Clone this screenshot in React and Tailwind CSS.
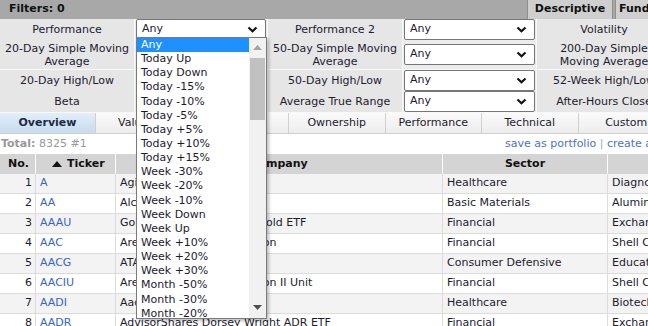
import React from "react";

const filterRows = [
  { h: "h-[21px]", cells: ["Performance", "Performance 2", "Volatility"] },
  {
    h: "h-[30px]",
    cells: ["20-Day Simple Moving Average", "50-Day Simple Moving Average", "200-Day Simple Moving Average"],
  },
  { h: "h-[21px]", cells: ["20-Day High/Low", "50-Day High/Low", "52-Week High/Low"] },
  { h: "h-[22px]", cells: ["Beta", "Average True Range", "After-Hours Close"] },
];

const tabs = ["Overview", "Valuation", "Financial", "Ownership", "Performance", "Technical", "Custom"];

const rows = [
  ["1", "A", "Agilent Technologies Inc", "Healthcare", "Diagnostics & Research"],
  ["2", "AA", "Alcoa Corp", "Basic Materials", "Aluminum"],
  ["3", "AAAU", "Goldman Sachs Physical Gold ETF", "Financial", "Exchange Traded Fund"],
  ["4", "AAC", "Ares Acquisition Corporation", "Financial", "Shell Companies"],
  ["5", "AACG", "ATA Creativity Global ADR", "Consumer Defensive", "Education & Training Services"],
  ["6", "AACIU", "Ares Acquisition Corporation II Unit", "Financial", "Shell Companies"],
  ["7", "AADI", "Aadi Bioscience Inc", "Healthcare", "Biotechnology"],
  ["8", "AADR", "AdvisorShares Dorsey Wright ADR ETF", "Financial", "Exchange Traded Fund"],
];

const options = [
  "Any", "Today Up", "Today Down", "Today -15%", "Today -10%", "Today -5%", "Today +5%",
  "Today +10%", "Today +15%", "Week -30%", "Week -20%", "Week -10%", "Week Down", "Week Up",
  "Week +10%", "Week +20%", "Week +30%", "Month -50%", "Month -30%", "Month -20%",
];

function Chevron() {
  return (
    <svg width="11" height="7" viewBox="0 0 11 7" className="shrink-0">
      <path d="M1.5 1.5 L5.5 5.2 L9.5 1.5" fill="none" stroke="#111" strokeWidth="2.2" />
    </svg>
  );
}

function Select() {
  return (
    <div className="flex h-[21px] w-full items-center justify-between rounded-[2px] border border-[#767676] bg-white pl-[5px] pr-[7px]">
      <span>Any</span>
      <Chevron />
    </div>
  );
}

function Label({ text }) {
  return (
    <div className="flex items-center justify-center border-r border-b border-[#f8f8f8] bg-[#e6e6e6] px-1 text-center leading-[13px] text-[#1d1a2e]">
      {text}
    </div>
  );
}

function SelectCell() {
  return (
    <div className="flex items-center border-r border-b border-[#f8f8f8] bg-[#ececec] px-px">
      <Select />
    </div>
  );
}

export default function App() {
  return (
    <div
      className="relative h-[326px] w-[648px] overflow-hidden bg-white text-[11px] text-[#1d1a2e]"
      style={{ fontFamily: '"DejaVu Sans", Verdana, sans-serif' }}
    >
      <div className="w-[760px]">
        {/* top bar */}
        <div className="flex h-[19px] items-stretch bg-[#a8a8a8]">
          <div className="flex w-[527px] items-center pl-[9px] font-bold text-[#111]">Filters: 0</div>
          <div className="flex w-[86px] items-center justify-center border-x border-[#8f8f8f] bg-[#cfcfcf] font-bold text-[#111]">
            Descriptive
          </div>
          <div className="ml-[2px] flex flex-1 items-center border-l border-[#8f8f8f] bg-[#cfcfcf] pl-[3px] font-bold text-[#111]">
            Fundamental
          </div>
        </div>

        {/* filters */}
        {filterRows.map((r, i) => (
          <div key={i} className={`grid ${r.h} grid-cols-[135px_133px_135px_134px_135px_130px]`}>
            <Label text={r.cells[0]} />
            <SelectCell />
            <Label text={r.cells[1]} />
            <SelectCell />
            <Label text={r.cells[2]} />
            <SelectCell />
          </div>
        ))}

        {/* tabs */}
        <div className="flex h-[21px] border-b border-[#d0d0d0] bg-[#f2f2f2]">
          {tabs.map((t, i) => (
            <div
              key={t}
              className={
                i === 0
                  ? "flex w-[96px] items-center justify-center border-r border-[#d0d0d0] bg-gradient-to-b from-[#e4eef8] to-[#c6dcef] font-bold text-[#1d2a44]"
                  : "flex w-[96.5px] items-center justify-center border-r border-[#d0d0d0] bg-gradient-to-b from-[#fafafa] to-[#ededed]"
              }
            >
              {t}
            </div>
          ))}
        </div>

        {/* total line */}
        <div className="grid h-[20px] grid-cols-[505px_1fr] items-center text-[#999]">
          <div className="pl-[1px]">
            <span className="font-bold">Total:</span> 8325 #1
          </div>
          <div className="whitespace-nowrap text-[#4a72cf]">
            save as portfolio <span className="text-[#9ab]">|</span> create alert
          </div>
        </div>

        {/* table */}
        <div className="grid h-[20px] grid-cols-[36px_80px_327px_165px_152px] bg-[#d4d4d4] font-bold text-[#111]">
          <div className="flex items-center border-r border-white pl-[8px]">No.</div>
          <div className="flex items-center gap-[5px] border-r border-white pl-[16px]">
            <svg width="10" height="6" viewBox="0 0 10 6">
              <path d="M0 6 L5 0 L10 6 Z" fill="#111" />
            </svg>
            Ticker
          </div>
          <div className="flex items-center justify-center border-r border-white">Company</div>
          <div className="flex items-center justify-center border-r border-white">Sector</div>
          <div className="flex items-center justify-center">Industry</div>
        </div>
        {rows.map((r, i) => (
          <div
            key={r[0]}
            className={`grid h-[20px] grid-cols-[36px_80px_327px_165px_152px] border-b border-[#dcdcdc] ${
              i % 2 === 0 ? "bg-[#f3f3f3]" : "bg-white"
            }`}
          >
            <div className="flex items-center justify-end border-r border-[#dcdcdc] pr-[3px]">{r[0]}</div>
            <div className="flex items-center border-r border-[#dcdcdc] pl-[4px] text-[#3565c8]">{r[1]}</div>
            <div className="flex items-center border-r border-[#dcdcdc] pl-[4px] whitespace-nowrap">{r[2]}</div>
            <div className="flex items-center border-r border-[#dcdcdc] pl-[4px] whitespace-nowrap">{r[3]}</div>
            <div className="flex items-center pl-[4px] whitespace-nowrap">{r[4]}</div>
          </div>
        ))}
      </div>

      {/* open dropdown */}
      <div className="absolute left-[136px] top-[37px] flex h-[282px] w-[131px] border border-[#7a7a7a] bg-white shadow-[2px_2px_3px_rgba(0,0,0,0.25)]">
        <div className="flex-1">
          {options.map((o, i) => (
            <div
              key={o}
              className={`flex h-[14.15px] items-center pl-[4px] leading-[14px] ${
                i === 0 ? "bg-[#1e90ff] text-white" : "text-[#1d1a2e]"
              }`}
            >
              {o}
            </div>
          ))}
        </div>
        <div className="flex w-[17px] flex-col items-center bg-[#f1f1f1]">
          <svg width="9" height="5" viewBox="0 0 9 5" className="mt-[7px]">
            <path d="M0 5 L4.5 0 L9 5 Z" fill="#a3a3a3" />
          </svg>
          <div className="mt-[8px] h-[62px] w-[15px] bg-[#c1c1c1]" />
          <div className="flex-1" />
          <svg width="9" height="5" viewBox="0 0 9 5" className="mb-[8px]">
            <path d="M0 0 L4.5 5 L9 0 Z" fill="#505050" />
          </svg>
        </div>
      </div>
    </div>
  );
}
